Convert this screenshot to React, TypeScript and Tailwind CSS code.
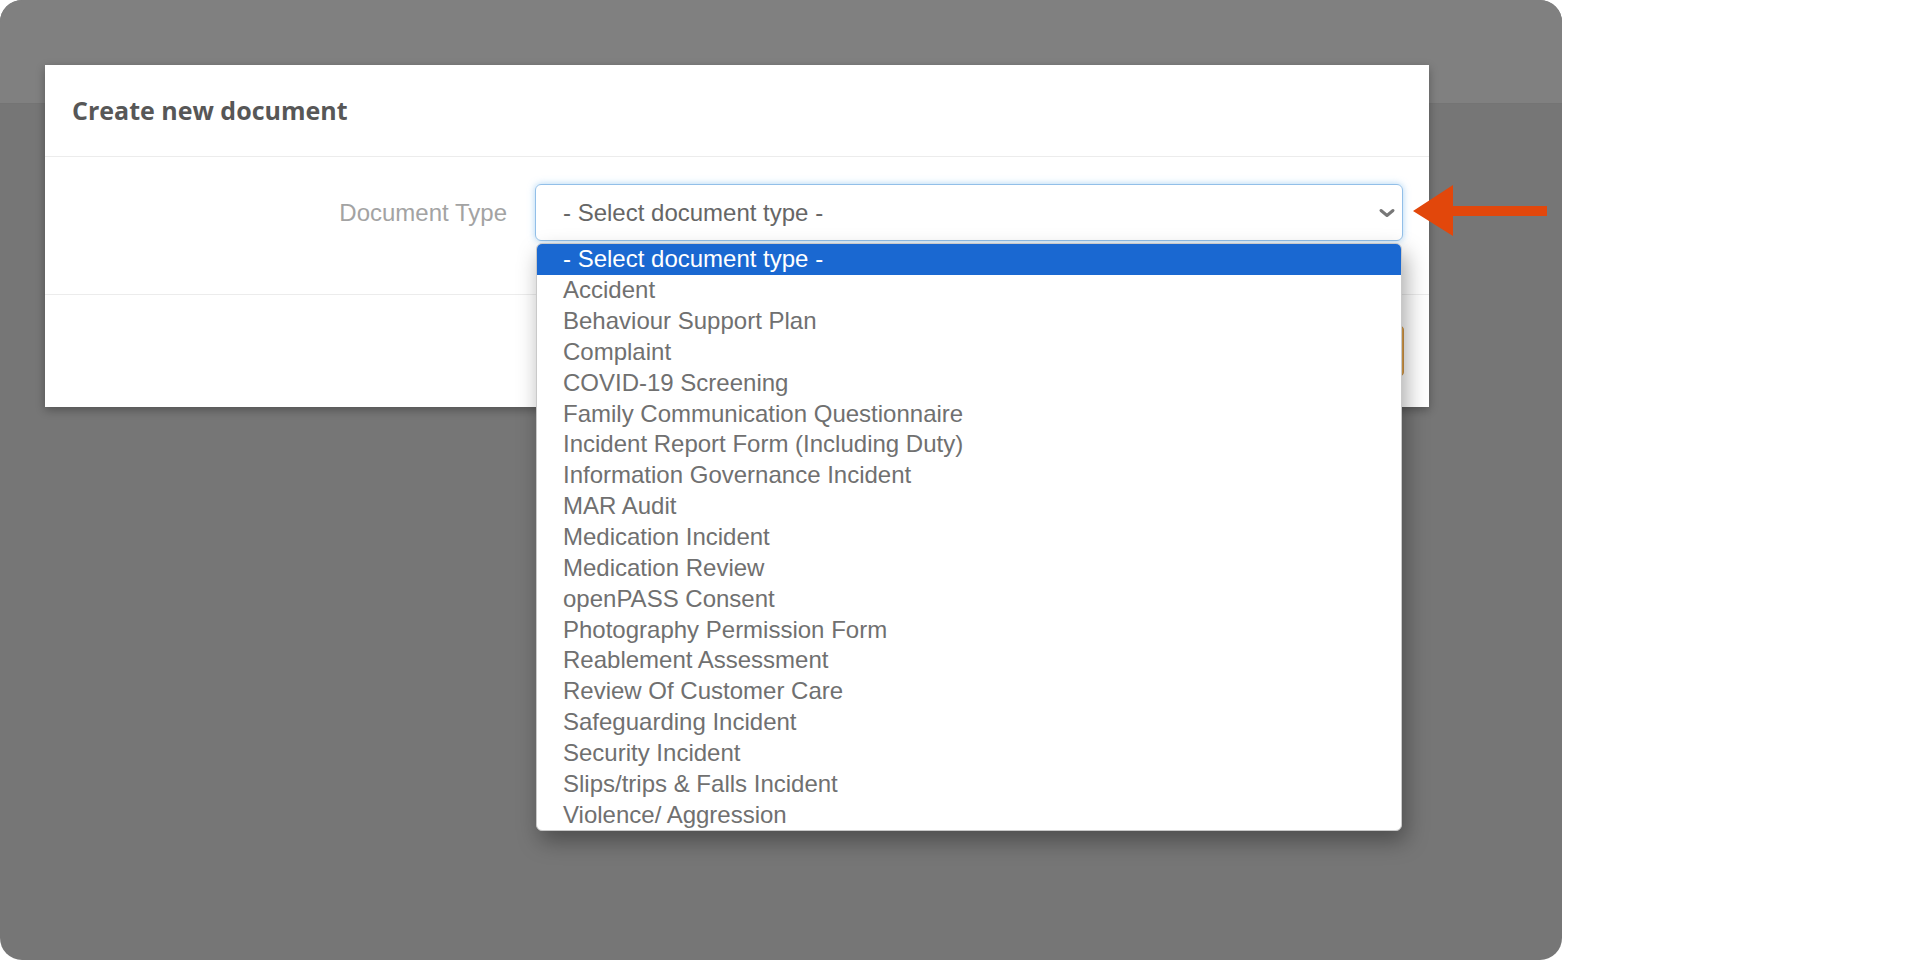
import React from "react";

const documentTypes = [
  "- Select document type -",
  "Accident",
  "Behaviour Support Plan",
  "Complaint",
  "COVID-19 Screening",
  "Family Communication Questionnaire",
  "Incident Report Form (Including Duty)",
  "Information Governance Incident",
  "MAR Audit",
  "Medication Incident",
  "Medication Review",
  "openPASS Consent",
  "Photography Permission Form",
  "Reablement Assessment",
  "Review Of Customer Care",
  "Safeguarding Incident",
  "Security Incident",
  "Slips/trips & Falls Incident",
  "Violence/ Aggression",
];

function Chevron() {
  return (
    <svg width="18" height="12" viewBox="0 0 18 12" className="shrink-0">
      <polyline
        points="3,3.5 9,8.5 15,3.5"
        fill="none"
        stroke="#777777"
        strokeWidth="3"
        strokeLinecap="round"
        strokeLinejoin="round"
      />
    </svg>
  );
}

function PointerArrow() {
  return (
    <svg
      width="140"
      height="60"
      viewBox="0 0 140 60"
      className="absolute left-[1410px] top-[180px]"
    >
      <polygon
        points="3,31 43,5 43,26 137,26 137,36 43,36 43,56"
        fill="#e2470b"
      />
    </svg>
  );
}

export default function App() {
  return (
    <div className="w-full h-[960px] bg-white flex font-['Liberation_Sans',Arial,sans-serif]">
      {/* Page behind the modal backdrop */}
      <div className="relative w-[1562px] h-full rounded-[22px] overflow-hidden bg-[#767676] flex flex-col">
        <div className="h-[104px] bg-[#808080] border-b border-[#747474]" />

        {/* Modal */}
        <div className="absolute left-[45px] top-[65px] w-[1384px] bg-white shadow-[0_3px_9px_rgba(0,0,0,0.3)]">
          <div className="h-[92px] px-[27px] flex items-center border-b border-[#ececec]">
            <h1 className="font-['Open_Sans',sans-serif] font-bold text-[25px] text-[#575757]">
              Create new document
            </h1>
          </div>

          <div className="h-[138px] px-[26px] pt-[27px] border-b border-[#ececec]">
            <div className="flex items-center">
              <label className="w-[464px] shrink-0 pr-[28px] text-right text-[24px] text-[#a3a3a3]">
                Document Type
              </label>
              <div className="relative flex-1">
                <div className="h-[57px] rounded-[6px] border border-[#92bfe8] shadow-[0_0_7px_rgba(102,175,233,0.55)] pl-[27px] pr-[6px] flex items-center justify-between">
                  <span className="text-[24px] text-[#666666]">- Select document type -</span>
                  <Chevron />
                </div>

                {/* Open option list */}
                <ul className="absolute z-10 left-px right-px top-full mt-[2px] bg-white rounded-[6px] overflow-hidden border border-[#c9c9c9] shadow-[4px_10px_22px_rgba(0,0,0,0.35)]">
                  {documentTypes.map((type, idx) => (
                    <li
                      key={type}
                      className={`h-[30.85px] pl-[26px] flex items-center text-[24px] whitespace-nowrap ${
                        idx === 0 ? "bg-[#1a68d1] text-white" : "text-[#707070]"
                      }`}
                    >
                      {type}
                    </li>
                  ))}
                </ul>
              </div>
            </div>
          </div>

          <div className="h-[112px] px-[25px] pt-[30px] flex justify-end gap-3">
            <button className="h-[52px] px-6 rounded-[5px] border border-[#cccccc] bg-white text-[22px] text-[#555]">
              Cancel
            </button>
            <button className="h-[52px] px-6 rounded-[5px] border border-[#d29a4d] bg-[#f0ad4e] text-[22px] text-white">
              Create
            </button>
          </div>
        </div>

        <PointerArrow />
      </div>
    </div>
  );
}
